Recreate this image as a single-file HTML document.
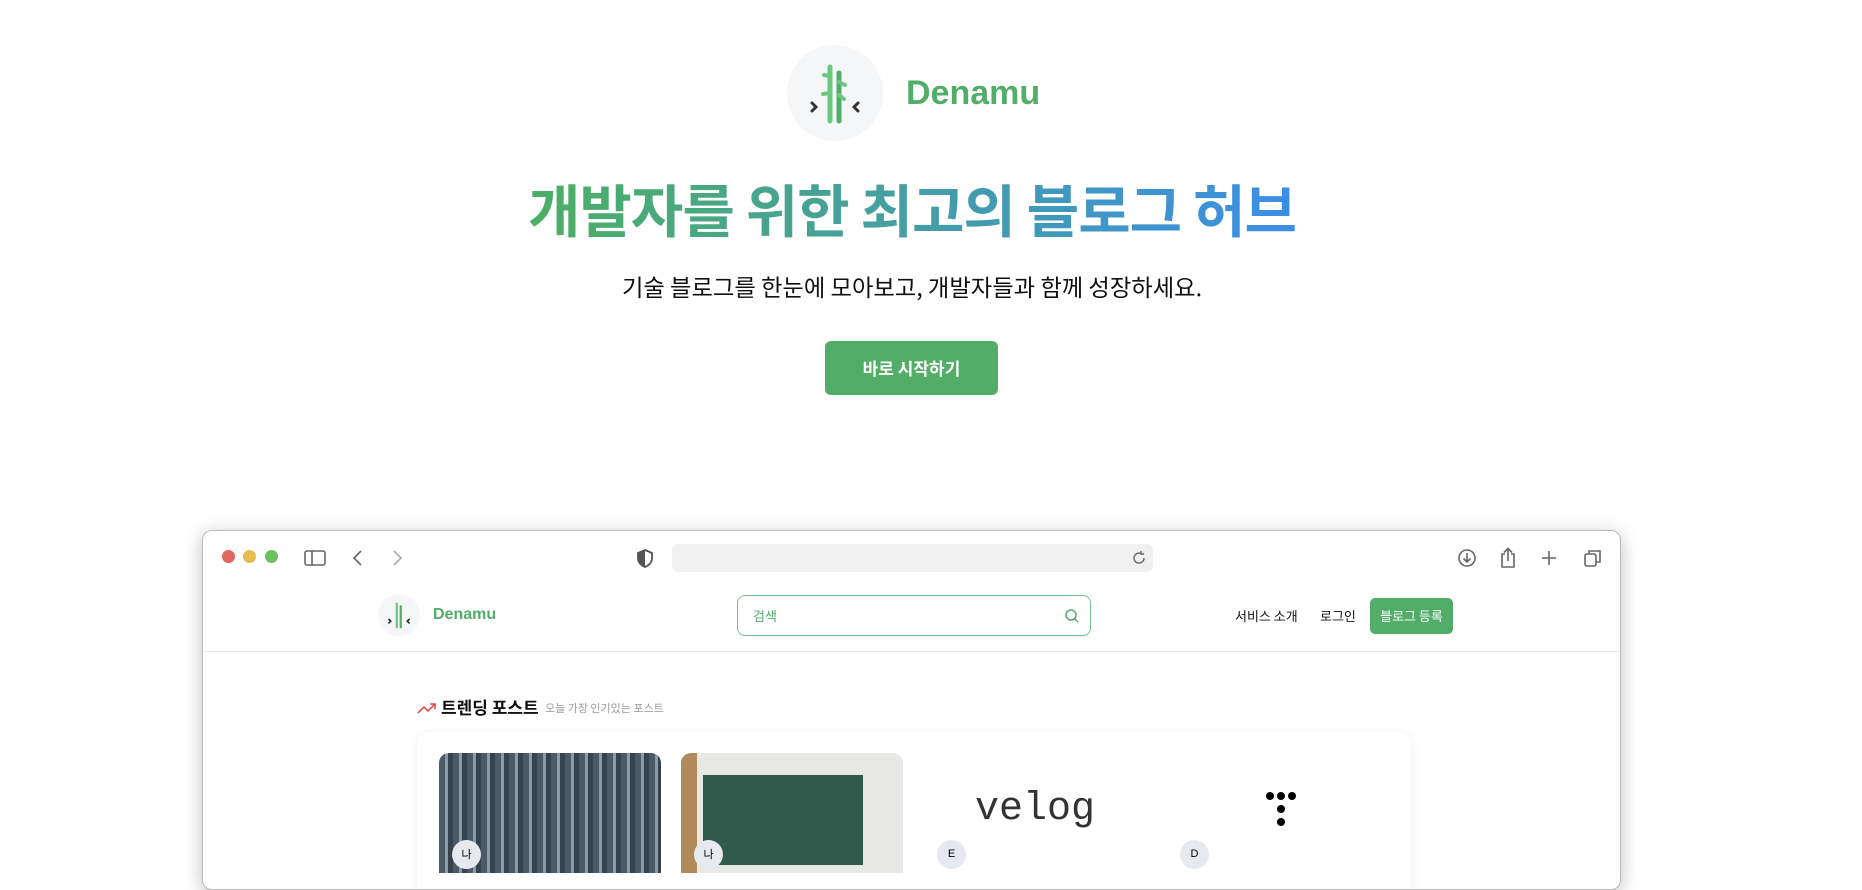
<!DOCTYPE html>
<html><head><meta charset="utf-8"><style>
*{margin:0;padding:0;box-sizing:border-box}
body{width:1862px;height:866px;overflow:hidden;background:#fff;font-family:"Liberation Sans","Noto Sans CJK KR",sans-serif;position:relative}
.a{position:absolute}
.t{font-family:"Noto Sans CJK KR","Liberation Sans",sans-serif}
</style></head><body>
<div class="a" style="left:787px;top:45px;width:96px;height:96px;border-radius:50%;background:#f4f6f8"></div>
<svg class="a" style="left:787px;top:45px" width="96" height="96" viewBox="0 0 96 96">
<g stroke-linecap="round" fill="none">
<line x1="43" y1="22" x2="43" y2="76" stroke="#6cc77f" stroke-width="5"/>
<line x1="52" y1="28" x2="52" y2="76" stroke="#52ad69" stroke-width="5"/>
<path d="M43 31 l-6 -1 M43 48 l-7 1 M52 37 l6 3 M52 50 l5 4" stroke="#6cc77f" stroke-width="4"/>
<path d="M25 58 l4 4 l-4 4 M71 58 l-4 4 l4 4" stroke="#333" stroke-width="3"/>
</g></svg>
<div class="a" style="left:906px;top:74px;font-size:34px;font-weight:bold;color:#52ad69">Denamu</div>
<div class="a t" style="left:0;width:1824px;top:167px;text-align:center;font-size:57px;font-weight:bold;letter-spacing:-1px"><span style="background:linear-gradient(90deg,#4daf64,#3b8ee6);-webkit-background-clip:text;color:transparent">개발자를 위한 최고의 블로그 허브</span></div>
<div class="a t" style="left:0;width:1824px;top:269px;text-align:center;font-size:23.3px;color:#111">기술 블로그를 한눈에 모아보고, 개발자들과 함께 성장하세요.</div>
<div class="a t" style="left:825px;top:341px;width:173px;height:54px;border-radius:6px;background:#52ad69;color:#fff;font-size:17px;font-weight:bold;text-align:center;line-height:54px">바로 시작하기</div>

<div class="a" style="left:202px;top:530px;width:1419px;height:360px;border:1px solid #bbb;border-radius:10px;box-shadow:0 4px 18px rgba(0,0,0,.25);background:#fff;overflow:hidden">
 <div class="a" style="left:19px;top:19px;width:13px;height:13px;border-radius:50%;background:#e0675c"></div>
 <div class="a" style="left:40px;top:19px;width:13px;height:13px;border-radius:50%;background:#e6bb4f"></div>
 <div class="a" style="left:62px;top:19px;width:13px;height:13px;border-radius:50%;background:#6bc160"></div>
 <svg class="a" style="left:100px;top:16px" width="360" height="22" fill="none" stroke="#666" stroke-width="1.6">
  <rect x="2" y="4" width="20" height="14" rx="2"/><line x1="9" y1="4" x2="9" y2="18"/>
  <path d="M58 4 l-7 7 l7 7"/><path d="M91 4 l7 7 l-7 7" stroke="#aaa"/>
 </svg>
 <svg class="a" style="left:433px;top:17px" width="18" height="20"><path d="M9 2 L16 5 V10 C16 15 12 18 9 19 C6 18 2 15 2 10 V5 Z" fill="none" stroke="#555" stroke-width="1.8"/><path d="M9 2 V19 C6 18 2 15 2 10 V5Z" fill="#555"/></svg>
 <div class="a" style="left:469px;top:13px;width:481px;height:28px;border-radius:6px;background:#f0f0f0"></div>
 <svg class="a" style="left:928px;top:19px" width="16" height="16" fill="none" stroke="#666" stroke-width="1.4"><path d="M13 8 A5 5 0 1 1 10 3.5 M10 1 v3 h3"/></svg>
 <svg class="a" style="left:1252px;top:15px" width="160" height="24" fill="none" stroke="#666" stroke-width="1.6">
  <circle cx="12" cy="12" r="8"/><path d="M12 7v9 M8.5 12.5 l3.5 3.5 l3.5-3.5"/>
  <path d="M50 8 h-3 v13 h12 v-13 h-3 M53 3 v12 M49 6.5 l4-4 l4 4"/>
  <path d="M94 5 v14 M87 12 h14"/>
  <rect x="130" y="8" width="11" height="12" rx="2"/><path d="M134 8 v-3 h11 v11 h-4"/>
 </svg>
 <div class="a" style="left:0;top:52px;width:1419px;height:69px;border-bottom:1px solid #e3e8ea"></div>
 <div class="a" style="left:175px;top:63px;width:42px;height:42px;border-radius:50%;background:#f4f6f8"></div>
 <svg class="a" style="left:175px;top:63px" width="42" height="42" viewBox="0 0 96 96"><g stroke-linecap="round" fill="none"><line x1="43" y1="22" x2="43" y2="76" stroke="#6cc77f" stroke-width="5"/><line x1="52" y1="28" x2="52" y2="76" stroke="#52ad69" stroke-width="5"/><path d="M25 58 l4 4 l-4 4 M71 58 l-4 4 l4 4" stroke="#333" stroke-width="4"/></g></svg>
 <div class="a" style="left:230px;top:75px;font-size:16px;font-weight:bold;color:#52ad69">Denamu</div>
 <div class="a" style="left:534px;top:64px;width:354px;height:41px;border:1px solid #74c487;border-radius:8px"></div>
 <div class="a t" style="left:550px;top:75px;font-size:13px;color:#52ad69">검색</div>
 <svg class="a" style="left:861px;top:77px" width="16" height="16" fill="none" stroke="#52ad69" stroke-width="1.5"><circle cx="7" cy="7" r="5"/><path d="M11 11l3 3"/></svg>
 <div class="a t" style="left:1032px;top:75px;font-size:13px;color:#111">서비스 소개</div>
 <div class="a t" style="left:1117px;top:75px;font-size:13px;color:#111">로그인</div>
 <div class="a t" style="left:1167px;top:67px;width:83px;height:36px;border-radius:5px;background:#52ad69;color:#fff;font-size:13px;text-align:center;line-height:36px">블로그 등록</div>
 <svg class="a" style="left:214px;top:170px" width="20" height="14" fill="none" stroke="#e0504f" stroke-width="1.6"><path d="M1 12 l6-6 l4 4 l7-7 M13 3 h5 v5"/></svg>
 <div class="a t" style="left:238px;top:163px;font-size:17px;font-weight:bold;color:#111">트렌딩 포스트</div>
 <div class="a t" style="left:342px;top:169px;font-size:11px;color:#999">오늘 가장 인기있는 포스트</div>
 <div class="a" style="left:214px;top:201px;width:994px;height:200px;border-radius:12px;background:#fff;box-shadow:0 2px 10px rgba(0,0,0,.07)"></div>
 <div class="a" style="left:236px;top:222px;width:222px;height:120px;border-radius:10px 10px 0 0;background:repeating-linear-gradient(90deg,#4a5a66 0 6px,#8a9ba6 6px 9px,#36424c 9px 14px)"></div>
 <div class="a" style="left:478px;top:222px;width:222px;height:120px;border-radius:10px 10px 0 0;background:linear-gradient(90deg,#b08a5a 0 16px,#e8e8e6 16px)"><div style="position:absolute;left:22px;top:22px;width:160px;height:90px;background:#2f5a4c"></div></div>
 <div class="a" style="left:721px;top:256px;width:222px;text-align:center;font-family:'Liberation Mono',monospace;font-size:40px;color:#333">velog</div>
 <svg class="a" style="left:1060px;top:260px" width="40" height="40"><g fill="#000"><circle cx="7" cy="5" r="4"/><circle cx="18" cy="5" r="4"/><circle cx="29" cy="5" r="4"/><circle cx="18" cy="18" r="4"/><circle cx="18" cy="31" r="4"/></g></svg>
 <div class="a t" style="left:249px;top:309px;width:29px;height:29px;border-radius:50%;background:#e6eaee;font-size:11px;text-align:center;line-height:29px">나</div>
 <div class="a t" style="left:491px;top:309px;width:29px;height:29px;border-radius:50%;background:#e6eaee;font-size:11px;text-align:center;line-height:29px">나</div>
 <div class="a" style="left:734px;top:309px;width:29px;height:29px;border-radius:50%;background:#e6eaee;font-size:11px;text-align:center;line-height:29px">E</div>
 <div class="a" style="left:977px;top:309px;width:29px;height:29px;border-radius:50%;background:#e6eaee;font-size:11px;text-align:center;line-height:29px">D</div>
</div>
</body></html>
